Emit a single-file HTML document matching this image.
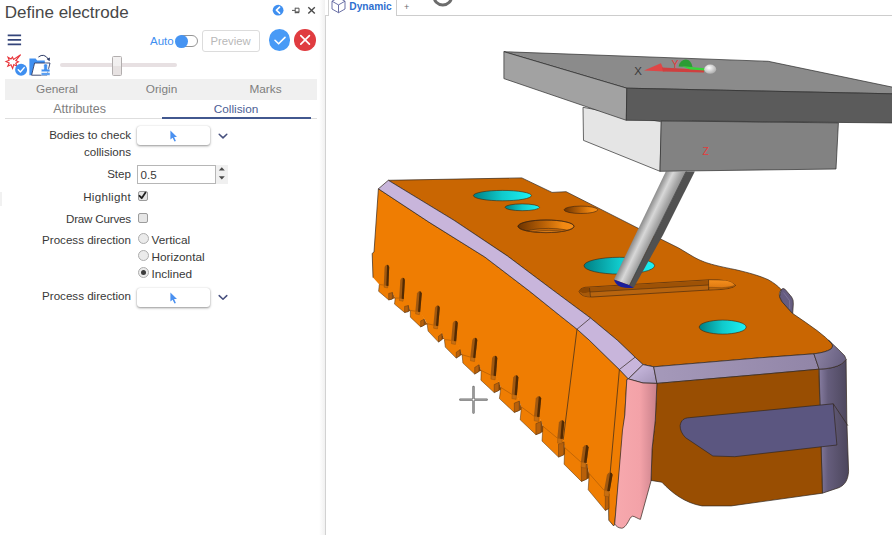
<!DOCTYPE html>
<html><head><meta charset="utf-8">
<style>
html,body{margin:0;padding:0;}
body{width:892px;height:535px;overflow:hidden;background:#fff;position:relative;font-family:"Liberation Sans",sans-serif;color:#3a3a3a;}
.abs{position:absolute;}
.t{position:absolute;white-space:nowrap;line-height:1;}
.lbl{position:absolute;white-space:nowrap;line-height:1;font-size:11.6px;color:#383838;text-align:right;right:761px;}
.opt{position:absolute;white-space:nowrap;line-height:1;font-size:11.8px;color:#383838;left:151.5px;}
.tab{position:absolute;white-space:nowrap;line-height:1;font-size:11.8px;color:#7e7e7e;transform:translateX(-50%);}
.pick{position:absolute;left:137px;width:73px;height:19.5px;background:#fff;border-radius:3px;box-shadow:0 1px 2.5px rgba(0,0,0,.42),0 0 1px rgba(0,0,0,.15);}
.cb{position:absolute;left:137.6px;width:8px;height:8px;border:1px solid #9c9c9c;border-radius:2px;background:#e6e6e6;}
.rd{position:absolute;left:138px;width:9.4px;height:9.4px;border:1px solid #adadad;border-radius:50%;background:#ebebeb;}
</style></head><body>
<!-- left panel -->
<div class="t" id="title" style="left:4.8px;top:3.6px;font-size:17px;color:#474747;">Define electrode</div>
<div class="abs" style="left:319px;top:0;width:6px;height:535px;background:linear-gradient(90deg,#ffffff,#f1f1f1);"></div>
<div class="abs" style="left:325px;top:15px;width:1px;height:520px;background:#d2d2d2;"></div>
<div class="abs" style="left:325px;top:14.5px;width:4px;height:1px;background:#d2d2d2;"></div>
<div class="abs" style="left:328px;top:0;width:1px;height:15px;background:#d2d2d2;"></div>
<div class="abs" style="left:395.5px;top:0;width:1px;height:15px;background:#cdcdcd;"></div>
<div class="abs" style="left:395.5px;top:14.5px;width:497px;height:1px;background:#cdcdcd;"></div>
<div class="t" style="left:349.3px;top:2.2px;font-size:10.2px;font-weight:bold;color:#2f6fd0;">Dynamic</div>
<div class="t" style="left:404px;top:3.2px;font-size:9px;color:#6a6a6a;">+</div>
<div class="t" style="left:150px;top:35.5px;font-size:11.5px;color:#3f8ff0;">Auto</div>
<div class="abs" style="left:176.5px;top:35.3px;width:19px;height:9.8px;border:1px solid #959595;border-radius:7px;background:#fff;"></div>
<div class="abs" style="left:175.4px;top:34.9px;width:12.8px;height:12.8px;border-radius:50%;background:#4694f2;"></div>
<div class="abs" style="left:201.5px;top:30px;width:56.5px;height:20px;border:1px solid #dcdcdc;border-radius:3px;"></div>
<div class="t" style="left:210.5px;top:35.5px;font-size:11.3px;color:#b8b8b8;">Preview</div>
<div class="abs" style="left:268.6px;top:28.9px;width:21.7px;height:21.7px;border-radius:50%;background:#489af6;"></div>
<div class="abs" style="left:294.2px;top:28.9px;width:21.7px;height:21.7px;border-radius:50%;background:#e03c40;"></div>
<!-- slider -->
<div class="abs" style="left:60px;top:63.3px;width:117px;height:4px;background:#e7e0e2;border-radius:2px;"></div>
<div class="abs" style="left:112px;top:56px;width:7.8px;height:17.5px;border:1px solid #b2aeae;background:linear-gradient(180deg,#f3f1f1 0%,#f1efef 48%,#e7e2e2 52%,#e7e2e2 100%);border-radius:1.5px;"></div>
<!-- tabs -->
<div class="abs" style="left:5.2px;top:79px;width:311.8px;height:20.5px;background:#f0f0f0;"></div>
<div class="tab" style="left:57px;top:83.5px;">General</div>
<div class="tab" style="left:161.5px;top:83.5px;">Origin</div>
<div class="tab" style="left:265.5px;top:83.5px;">Marks</div>
<div class="tab" style="left:79.6px;top:103.3px;font-size:12.5px;">Attributes</div>
<div class="tab" style="left:236px;top:103.5px;color:#4c6096;">Collision</div>
<div class="abs" style="left:5.2px;top:118px;width:311.8px;height:1px;background:#dedede;"></div>
<div class="abs" style="left:162px;top:117px;width:149px;height:2px;background:#42588f;"></div>
<div class="abs" style="left:0;top:192px;width:2px;height:14px;background:#f1f1f1;"></div>
<!-- form -->
<div class="lbl" style="top:129px;">Bodies to check</div>
<div class="lbl" style="top:145.5px;">collisions</div>
<div class="pick" style="top:125.5px;"></div>
<div class="lbl" style="top:167.5px;">Step</div>
<div class="abs" style="left:137px;top:164.5px;width:76.5px;height:17px;border:1px solid #b6b6b6;background:#fff;"></div>
<div class="t" style="left:140.5px;top:168.5px;font-size:11.6px;color:#383838;">0.5</div>
<div class="abs" style="left:215.5px;top:165px;width:12.5px;height:19px;background:#f0f0f0;"></div>
<div class="lbl" style="top:190.5px;letter-spacing:0.3px;">Highlight</div>
<div class="cb" style="top:190.8px;"></div>
<div class="lbl" style="top:212.7px;letter-spacing:-0.18px;">Draw Curves</div>
<div class="cb" style="top:212.8px;"></div>
<div class="lbl" style="top:234.3px;">Process direction</div>
<div class="rd" style="top:232.7px;"></div>
<div class="opt" style="top:234.8px;">Vertical</div>
<div class="rd" style="top:249.8px;"></div>
<div class="opt" style="top:252px;">Horizontal</div>
<div class="rd" style="top:267.1px;"></div>
<div class="abs" style="left:141.2px;top:270.3px;width:5px;height:5px;border-radius:50%;background:#3c3c3c;"></div>
<div class="opt" style="top:268.8px;">Inclined</div>
<div class="lbl" style="top:290.3px;">Process direction</div>
<div class="pick" style="top:287.5px;"></div>
<!-- panel icons -->
<svg class="abs" style="left:0;top:0;" width="330" height="320" viewBox="0 0 330 320">
<!-- hamburger -->
<path d="M7.7,35.3 H21.1 M7.7,39.9 H21.1 M7.7,44.4 H21.1" stroke="#34457a" stroke-width="1.8" fill="none"/>
<!-- titlebar icons -->
<circle cx="278.1" cy="10.2" r="5.4" fill="#3f8ff0"/>
<path d="M279.6,7.2 L276.4,10.2 L279.6,13.2" stroke="#fff" stroke-width="1.6" fill="none" stroke-linecap="round" stroke-linejoin="round"/>
<path d="M292,10.4 H295.2 M295.2,7.8 V13.2 M295.2,8.2 H299 V12.2 H295.2" stroke="#555" stroke-width="1" fill="none"/>
<path d="M295.2,12.4 H299.2" stroke="#555" stroke-width="1.6" fill="none"/>
<path d="M308.3,7.3 L314.8,13.6 M314.8,7.3 L308.3,13.6" stroke="#4a4a4a" stroke-width="1.4" fill="none"/>
<!-- check / x in circles -->
<path d="M275,40.3 L278.6,43.8 L285,37.4" stroke="#fff" stroke-width="1.6" fill="none" stroke-linecap="round" stroke-linejoin="round"/>
<path d="M300.8,35.7 L309.4,44.1 M309.4,35.7 L300.8,44.1" stroke="#fff" stroke-width="1.7" fill="none" stroke-linecap="round"/>
<!-- spark icon -->
<g stroke="#e8343a" stroke-width="1.1" fill="#fff" stroke-linejoin="miter">
<path d="M12.4,57 L13.6,59.4 L20.6,54.6 L15.8,60.6 L18.4,61.8 L15.8,63.2 L17,66.4 L13.8,64.6 L12.6,68.4 L11,64.8 L7.8,66.2 L9.2,63 L6,61.6 L9.2,60.2 L8,57.2 L11,59 Z"/>
</g>
<circle cx="21.1" cy="69.7" r="6" fill="#3f8ff0"/>
<path d="M18.2,69.8 L20.4,72 L24.2,67.6" stroke="#fff" stroke-width="1.4" fill="none" stroke-linecap="round" stroke-linejoin="round"/>
<!-- folder icon -->
<path d="M29.4,58.4 H35.6 L37.2,60.6 H44.8 V63 H34.6 L31.6,75.2 H29.4 Z" fill="#3f8ff0"/>
<path d="M34.6,63 H50 L47,75.2 H31.6 Z" fill="#fff" stroke="#2c3a66" stroke-width="0.9"/>
<path d="M38.4,57 Q44,52.6 48.6,59.4" stroke="#2c3a66" stroke-width="1" fill="none"/>
<path d="M46.6,59 L49.6,61.2 L50,57.6 Z" fill="#2c3a66"/>
<path d="M43.9,66.6 a1.9,1.9 0 1 1 3.4,0 v2.6 h2.6 v2.6 h-8.6 v-2.6 h2.6 Z M41.2,72.8 h8.8 v2.4 h-8.8 Z" fill="#3f8ff0" stroke="#fff" stroke-width="0.5"/>
<!-- pick cursors -->
<path id="cur" d="M170.4,130.4 L170.4,139.6 L172.6,137.7 L174.5,141.6 L175.9,140.9 L174.1,137.1 L177,136.9 Z" fill="#4a90f0"/>
<path d="M170.4,292.4 L170.4,301.6 L172.6,299.7 L174.5,303.6 L175.9,302.9 L174.1,299.1 L177,298.9 Z" fill="#4a90f0"/>
<!-- chevrons -->
<path d="M219.2,134.2 L223,137.9 L226.8,134.2" stroke="#47507e" stroke-width="1.5" fill="none" stroke-linecap="round" stroke-linejoin="round"/>
<path d="M219.2,295.6 L223,299.3 L226.8,295.6" stroke="#47507e" stroke-width="1.5" fill="none" stroke-linecap="round" stroke-linejoin="round"/>
<!-- spinner arrows -->
<path d="M218.8,170.4 L221.8,167.2 L224.8,170.4 Z M218.8,176.2 L221.8,179.4 L224.8,176.2 Z" fill="#4a4a4a"/>
<!-- checkmark -->
<path d="M139.5,195.8 L141.7,198.2 L145.5,192.6" stroke="#222" stroke-width="1.8" fill="none" stroke-linecap="round" stroke-linejoin="round"/>
<!-- Dynamic cube -->
</svg>
<svg class="abs" style="left:326px;top:0;" width="140" height="16" viewBox="326 0 140 16">
<path d="M338.5,-2.4 L345,1.2 V9 L338.5,12.7 L332,9 V1.2 Z M332,1.2 L338.5,4.9 L345,1.2 M338.5,4.9 V12.7" stroke="#5a609c" stroke-width="0.9" fill="none" stroke-linejoin="round"/>
<circle cx="442.8" cy="-3.7" r="8.8" stroke="#6c6c6c" stroke-width="3" fill="none"/>
</svg>
<!-- viewport -->
<svg class="abs" style="left:0;top:0;" width="892" height="535" viewBox="0 0 892 535">
<defs>
<linearGradient id="teal" x1="0" y1="0" x2="1" y2="0"><stop offset="0" stop-color="#008084"/><stop offset="0.5" stop-color="#10cacc"/><stop offset="1" stop-color="#1cf2f4"/></linearGradient>
<linearGradient id="hole" x1="0" y1="0" x2="1" y2="0"><stop offset="0" stop-color="#6e3400"/><stop offset="0.45" stop-color="#b86006"/><stop offset="0.8" stop-color="#f08812"/><stop offset="1" stop-color="#f58c16"/></linearGradient>
<linearGradient id="rod" x1="0" y1="0" x2="1" y2="0"><stop offset="0" stop-color="#6e6e6e"/><stop offset="0.32" stop-color="#f2f2f2"/><stop offset="0.6" stop-color="#c4c4c4"/><stop offset="1" stop-color="#8a8a8a"/></linearGradient>
<linearGradient id="fcham" x1="0" y1="0" x2="1" y2="0"><stop offset="0" stop-color="#a599ba"/><stop offset="1" stop-color="#9185a7"/></linearGradient>
<linearGradient id="rside" x1="0" y1="0" x2="1" y2="0"><stop offset="0" stop-color="#867ca0"/><stop offset="0.3" stop-color="#655d7c"/><stop offset="1" stop-color="#4c465c"/></linearGradient>
<linearGradient id="pink" x1="0" y1="0" x2="1" y2="0"><stop offset="0" stop-color="#f7a9ae"/><stop offset="0.6" stop-color="#f3a2a8"/><stop offset="1" stop-color="#c8808a"/></linearGradient>
<linearGradient id="corner" x1="0" y1="0" x2="1" y2="1"><stop offset="0" stop-color="#d0c0e6"/><stop offset="1" stop-color="#a294b8"/></linearGradient>
<linearGradient id="rcorner" x1="0" y1="0" x2="1" y2="0.3"><stop offset="0" stop-color="#9086a8"/><stop offset="1" stop-color="#6a6282"/></linearGradient>
</defs>
<g stroke="#32261e" stroke-width="0.7" stroke-linejoin="round">
<!-- ORANGE BODY -->
<!-- side face -->
<path fill="#ef7d02" stroke="none" d="M378.4,188.8 L428.9,222.1 L484.8,257 L529.7,291.3 L560,315.7 L577,329.2 L589.1,340 L619.4,369.5 L628.4,378.9 L626.8,379.6 L624.8,415 L614.7,524 L613.7,526 L608.8,520.2 L608.4,493 L609.7,491.1 L589.2,473.5 L586.5,462.7 L564.7,447.6 L562.7,438.8 L542.9,426.2 L539.4,416.9 L521.4,406.9 L516.9,395.0 L500.9,387.5 L495.9,375.8 L481.2,370.5 L475.3,357.8 L462.1,354.7 L456.2,341.0 L444.4,339.6 L438.2,325.8 L427.1,323.6 L420.2,311.9 L410.3,310.4 L403.8,298.8 L395.2,298.0 L388.4,285.8 L379.3,284.5 L373,277.6 L372.2,253.4 L374,252 Z"/>
<path fill="none" d="M378.4,188.8 L428.9,222.1 L484.8,257 L529.7,291.3 L560,315.7 L577,329.2 L589.1,340 L619.4,369.5 L628.4,378.9 L626.8,379.6 L624.8,415 L614.7,524 L613.7,526 L608.8,520.2 L608.4,493 M373,277.6 L372.2,253.4 L374,252 L378.4,188.8"/>
<!-- top face -->
<path fill="#c96602" d="M388.3,180.3 L521.8,177.9 L552,192.4 L566.1,191.7 L639,228.7 L660,238.7 L678.7,248 L692,256 C703,262.5 712,265 734.8,269.5 C750,273 760,276 768.4,279.8 C774,283 778,286 781.2,289.6 C779.3,292 779,294.5 779.6,296.6 C780.3,299 781,300.6 782.4,302.2 L792.7,313.5 L805.2,322.1 L817,330.5 L825.4,337.3 L831,342.8 Q834.2,346 830.8,349.2 Q825,352.6 813.9,353.8 L760,357.8 L653.7,366.8 L643,364.6 L635.1,357.2 L617.1,340 L590.5,318 L552.1,289.5 L507.3,255.9 L454,220.3 Z"/>
<!-- long chamfer -->
<path fill="#c8b5db" d="M388.3,180.3 L454,220.3 L507.3,255.9 L552.1,289.5 L590.5,318 L617.1,340 L635.1,357.2 L643,364.6 L653.7,366.8 L656.9,383.4 L643,383 L628.4,378.9 L619.4,369.5 L589.1,340 L577,329.2 L560,315.7 L529.7,291.3 L484.8,257 L428.9,222.1 L378.4,188.8 Z"/>
<path fill="none" d="M590.5,318 L577,329.2 M635.1,357.2 L619.4,369.5 M643,364.6 L628.4,378.9 M577,329.2 L563.2,440 M619.4,369.5 L608.4,492.7"/>
<!-- corner chamfer -->
<path fill="url(#corner)" d="M643,364.6 L653.7,366.8 L656.9,383.4 L643,383 L628.4,378.9 Z"/>
<!-- front chamfer -->
<path fill="url(#fcham)" d="M653.7,366.8 L760,357.8 L813.9,353.8 L819.1,369.2 L760,374.5 L656.9,383.4 Z"/>
<!-- corner + right side -->
<path fill="url(#rside)" d="M819.1,369.2 Q834,368.6 841.6,364 L846.1,359.5 L846.8,420 L848.6,471.3 C848,480 845,485 838.8,487.7 L822.4,493.2 Z"/>
<path fill="url(#rcorner)" d="M828.4,340 L832.4,343.8 L838.9,349.9 L844.7,355.8 L846.1,359.5 L841.6,364 Q834,368.6 819.1,369.2 L813.9,353.8 Q825,352.6 830.8,349.2 Q834.2,346 831,342.8 Z"/>
<!-- notch sliver -->
<path fill="#655c80" d="M781.2,289.6 Q783,287.4 785.2,289.4 L791.6,297 Q793.8,300 793.3,304 L792.7,313.5 L782.4,302.2 L779.6,296.6 Z"/>
<path fill="none" stroke="#8a82a4" stroke-width="0.6" d="M783.6,292.6 L789.6,300.6 L789.8,309"/>
<!-- front face -->
<path fill="#994e02" d="M656.9,383.4 L760,374.5 L818.8,369.2 L822.4,493.2 L731.2,505.9 L702,505.9 C685,503 672,493 661.9,482.2 L651,480.4 L652.1,448.6 L655.3,420 Z"/>
<!-- front slot -->
<path fill="#5b5680" d="M680.1,425.7 C681,420 684,418 689.2,417.7 L833.3,403.8 L836.9,445 L734.8,456.7 L712.9,456 L685.6,437.7 C682,434 680,430 680.1,425.7 Z"/>
<path fill="none" d="M833.3,403.8 L847.9,425.7"/>
<!-- teeth -->
<path fill="#9a5006" stroke="none" d="M392.4,292.5 L392.4,299.0 L395.0,298.2 L395.5,299.5 L395.2,298.0 Z"/>
<path fill="#ef7d02" stroke="none" d="M379.3,284.5 L378.6,291.3 L388.7,299.9 L392.4,299.0 L392.4,292.5 L392.1,290.9 L388.4,284.1 L380.7,283.3 Z"/>
<path fill="none" stroke="#4a2806" stroke-width="0.5" d="M379.3,284.5 L378.6,291.3 L388.7,299.9 L392.4,299.0 L392.4,292.5"/>
<path fill="none" stroke="#8a4a08" stroke-width="0.45" d="M379.3,284.5 L383.8,285.1"/>
<path fill="#b8600a" stroke-width="0.35" d="M388.7,299.9 L392.4,299.0 L392.4,292.5 L388.7,293.4 Z"/>
<path fill="#c66e12" stroke="#7a4208" stroke-width="0.3" d="M384.2,285.0 L388.0,286.0 L387.6,288.0 L384.0,287.2 Z"/>
<path fill="#a05810" stroke="none" d="M384.6,267.0 Q386.9,262.5 389.2,267.0 L388.4,286.0 L383.8,285.0 Z"/>
<path fill="#522a02" stroke="none" d="M387.1,264.8 Q388.7,264.7 389.2,267.0 L388.4,286.0 L386.3,285.7 Z"/>
<path fill="#9a5006" stroke="none" d="M408.3,305.5 L408.3,311.6 L410.8,310.8 L410.6,311.9 L410.3,310.4 Z"/>
<path fill="#ef7d02" stroke="none" d="M395.2,298.0 L394.5,304.1 L404.6,312.5 L408.3,311.6 L408.3,305.5 L408.0,303.9 L403.8,297.1 L396.6,296.8 Z"/>
<path fill="none" stroke="#4a2806" stroke-width="0.5" d="M395.2,298.0 L394.5,304.1 L404.6,312.5 L408.3,311.6 L408.3,305.5"/>
<path fill="none" stroke="#8a4a08" stroke-width="0.45" d="M395.2,298.0 L399.2,298.1"/>
<path fill="#b8600a" stroke-width="0.35" d="M404.6,312.5 L408.3,311.6 L408.3,305.5 L404.6,306.4 Z"/>
<path fill="#c66e12" stroke="#7a4208" stroke-width="0.3" d="M399.6,298.0 L403.4,299.0 L403.0,301.3 L399.4,300.5 Z"/>
<path fill="#a05810" stroke="none" d="M400.3,280.0 Q402.6,275.5 404.9,280.0 L403.8,299.0 L399.2,298.0 Z"/>
<path fill="#522a02" stroke="none" d="M402.8,277.8 Q404.5,277.7 404.9,280.0 L403.8,299.0 L401.7,298.7 Z"/>
<path fill="#9a5006" stroke="none" d="M424.2,319.2 L424.2,325.2 L426.9,324.4 L427.4,325.1 L427.1,323.6 Z"/>
<path fill="#ef7d02" stroke="none" d="M410.3,310.4 L410.4,317.2 L420.7,326.9 L424.2,325.2 L424.2,319.2 L423.9,317.6 L420.2,310.2 L411.7,309.2 Z"/>
<path fill="none" stroke="#4a2806" stroke-width="0.5" d="M410.3,310.4 L410.4,317.2 L420.7,326.9 L424.2,325.2 L424.2,319.2"/>
<path fill="none" stroke="#8a4a08" stroke-width="0.45" d="M410.3,310.4 L415.4,311.2"/>
<path fill="#b8600a" stroke-width="0.35" d="M420.7,326.9 L424.2,325.2 L424.2,319.2 L420.7,320.9 Z"/>
<path fill="#c66e12" stroke="#7a4208" stroke-width="0.3" d="M415.8,311.1 L419.8,312.1 L419.4,314.7 L415.6,313.9 Z"/>
<path fill="#a05810" stroke="none" d="M417.0,293.4 Q419.4,288.9 421.8,293.4 L420.2,312.1 L415.4,311.1 Z"/>
<path fill="#522a02" stroke="none" d="M419.6,291.2 Q421.3,291.1 421.8,293.4 L420.2,312.1 L418.0,311.8 Z"/>
<path fill="#9a5006" stroke="none" d="M441.9,333.7 L441.9,339.6 L444.5,338.8 L444.7,341.1 L444.4,339.6 Z"/>
<path fill="#ef7d02" stroke="none" d="M427.1,323.6 L428.1,331.1 L438.5,342.1 L441.9,339.6 L441.9,333.7 L441.6,332.1 L438.2,324.1 L428.5,322.4 Z"/>
<path fill="none" stroke="#4a2806" stroke-width="0.5" d="M427.1,323.6 L428.1,331.1 L438.5,342.1 L441.9,339.6 L441.9,333.7"/>
<path fill="none" stroke="#8a4a08" stroke-width="0.45" d="M427.1,323.6 L433.4,325.1"/>
<path fill="#b8600a" stroke-width="0.35" d="M438.5,342.1 L441.9,339.6 L441.9,333.7 L438.5,336.2 Z"/>
<path fill="#c66e12" stroke="#7a4208" stroke-width="0.3" d="M433.8,325.0 L437.8,326.0 L437.4,329.0 L433.6,328.2 Z"/>
<path fill="#a05810" stroke="none" d="M435.0,307.8 Q437.4,303.3 439.8,307.8 L438.2,326.0 L433.4,325.0 Z"/>
<path fill="#522a02" stroke="none" d="M437.6,305.6 Q439.3,305.5 439.8,307.8 L438.2,326.0 L436.0,325.7 Z"/>
<path fill="#9a5006" stroke="none" d="M460.1,349.7 L460.1,355.6 L462.6,354.8 L462.4,356.2 L462.1,354.7 Z"/>
<path fill="#ef7d02" stroke="none" d="M444.4,339.6 L445.3,347.1 L456.2,358.1 L460.1,355.6 L460.1,349.7 L459.8,348.1 L456.2,339.3 L445.8,338.4 Z"/>
<path fill="none" stroke="#4a2806" stroke-width="0.5" d="M444.4,339.6 L445.3,347.1 L456.2,358.1 L460.1,355.6 L460.1,349.7"/>
<path fill="none" stroke="#8a4a08" stroke-width="0.45" d="M444.4,339.6 L451.2,340.3"/>
<path fill="#b8600a" stroke-width="0.35" d="M456.2,358.1 L460.1,355.6 L460.1,349.7 L456.2,352.2 Z"/>
<path fill="#c66e12" stroke="#7a4208" stroke-width="0.3" d="M451.6,340.2 L455.8,341.2 L455.4,344.5 L451.4,343.7 Z"/>
<path fill="#a05810" stroke="none" d="M452.8,323.0 Q455.3,318.5 457.8,323.0 L456.2,341.2 L451.2,340.2 Z"/>
<path fill="#522a02" stroke="none" d="M455.5,320.8 Q457.3,320.7 457.8,323.0 L456.2,341.2 L453.9,340.9 Z"/>
<path fill="#9a5006" stroke="none" d="M478.9,364.8 L478.9,371.5 L481.5,370.7 L481.6,372.0 L481.2,370.5 Z"/>
<path fill="#ef7d02" stroke="none" d="M462.1,354.7 L462.9,363.1 L474.7,374.1 L478.9,371.5 L478.9,364.8 L478.6,363.2 L475.3,356.1 L463.5,353.5 Z"/>
<path fill="none" stroke="#4a2806" stroke-width="0.5" d="M462.1,354.7 L462.9,363.1 L474.7,374.1 L478.9,371.5 L478.9,364.8"/>
<path fill="none" stroke="#8a4a08" stroke-width="0.45" d="M462.1,354.7 L470.3,357.1"/>
<path fill="#b8600a" stroke-width="0.35" d="M474.7,374.1 L478.9,371.5 L478.9,364.8 L474.7,367.4 Z"/>
<path fill="#c66e12" stroke="#7a4208" stroke-width="0.3" d="M470.7,357.0 L474.9,358.0 L474.5,361.6 L470.5,360.8 Z"/>
<path fill="#a05810" stroke="none" d="M472.3,339.9 Q474.8,335.4 477.3,339.9 L475.3,358.0 L470.3,357.0 Z"/>
<path fill="#522a02" stroke="none" d="M475.1,337.7 Q476.8,337.6 477.3,339.9 L475.3,358.0 L473.1,357.7 Z"/>
<path fill="#9a5006" stroke="none" d="M498.9,382.4 L498.9,390.4 L501.4,389.6 L501.2,389.0 L500.9,387.5 Z"/>
<path fill="#ef7d02" stroke="none" d="M481.2,370.5 L480.9,380.2 L494.2,392.6 L498.9,390.4 L498.9,382.4 L498.6,380.8 L495.9,374.1 L482.6,369.3 Z"/>
<path fill="none" stroke="#4a2806" stroke-width="0.5" d="M481.2,370.5 L480.9,380.2 L494.2,392.6 L498.9,390.4 L498.9,382.4"/>
<path fill="none" stroke="#8a4a08" stroke-width="0.45" d="M481.2,370.5 L490.7,375.1"/>
<path fill="#b8600a" stroke-width="0.35" d="M494.2,392.6 L498.9,390.4 L498.9,382.4 L494.2,384.6 Z"/>
<path fill="#c66e12" stroke="#7a4208" stroke-width="0.3" d="M491.1,375.0 L495.5,376.0 L495.1,379.9 L490.9,379.1 Z"/>
<path fill="#a05810" stroke="none" d="M492.1,358.0 Q494.7,353.5 497.3,358.0 L495.9,376.0 L490.7,375.0 Z"/>
<path fill="#522a02" stroke="none" d="M495.0,355.8 Q496.8,355.7 497.3,358.0 L495.9,376.0 L493.6,375.7 Z"/>
<path fill="#9a5006" stroke="none" d="M519.3,401.1 L519.3,410.4 L521.9,409.6 L521.7,408.4 L521.4,406.9 Z"/>
<path fill="#ef7d02" stroke="none" d="M500.9,387.5 L499.4,398.6 L514.3,412.4 L519.3,410.4 L519.3,401.1 L519.0,399.5 L516.9,393.3 L502.3,386.3 Z"/>
<path fill="none" stroke="#4a2806" stroke-width="0.5" d="M500.9,387.5 L499.4,398.6 L514.3,412.4 L519.3,410.4 L519.3,401.1"/>
<path fill="none" stroke="#8a4a08" stroke-width="0.45" d="M500.9,387.5 L511.7,394.3"/>
<path fill="#b8600a" stroke-width="0.35" d="M514.3,412.4 L519.3,410.4 L519.3,401.1 L514.3,403.1 Z"/>
<path fill="#c66e12" stroke="#7a4208" stroke-width="0.3" d="M512.1,394.2 L516.5,395.2 L516.1,399.4 L511.9,398.6 Z"/>
<path fill="#a05810" stroke="none" d="M513.2,377.4 Q515.8,372.9 518.4,377.4 L516.9,395.2 L511.7,394.2 Z"/>
<path fill="#522a02" stroke="none" d="M516.1,375.2 Q517.9,375.1 518.4,377.4 L516.9,395.2 L514.6,394.9 Z"/>
<path fill="#9a5006" stroke="none" d="M541.1,421.5 L541.1,432.6 L543.4,431.8 L543.2,427.7 L542.9,426.2 Z"/>
<path fill="#ef7d02" stroke="none" d="M521.4,406.9 L520.2,419.8 L535.9,434.7 L541.1,432.6 L541.1,421.5 L540.8,419.9 L539.4,415.2 L522.8,405.7 Z"/>
<path fill="none" stroke="#4a2806" stroke-width="0.5" d="M521.4,406.9 L520.2,419.8 L535.9,434.7 L541.1,432.6 L541.1,421.5"/>
<path fill="none" stroke="#8a4a08" stroke-width="0.45" d="M521.4,406.9 L534.0,416.2"/>
<path fill="#b8600a" stroke-width="0.35" d="M535.9,434.7 L541.1,432.6 L541.1,421.5 L535.9,423.6 Z"/>
<path fill="#c66e12" stroke="#7a4208" stroke-width="0.3" d="M534.4,416.1 L539.0,417.1 L538.6,421.6 L534.2,420.8 Z"/>
<path fill="#a05810" stroke="none" d="M535.8,398.5 Q538.5,394.0 541.2,398.5 L539.4,417.1 L534.0,416.1 Z"/>
<path fill="#522a02" stroke="none" d="M538.8,396.3 Q540.6,396.2 541.2,398.5 L539.4,417.1 L537.0,416.8 Z"/>
<path fill="#9a5006" stroke="none" d="M563.8,441.9 L563.8,454.8 L565.2,454.0 L565.0,449.1 L564.7,447.6 Z"/>
<path fill="#ef7d02" stroke="none" d="M542.9,426.2 L542.0,441.1 L558.5,457.1 L563.8,454.8 L563.8,441.9 L563.5,440.3 L562.7,437.1 L544.3,425.0 Z"/>
<path fill="none" stroke="#4a2806" stroke-width="0.5" d="M542.9,426.2 L542.0,441.1 L558.5,457.1 L563.8,454.8 L563.8,441.9"/>
<path fill="none" stroke="#8a4a08" stroke-width="0.45" d="M542.9,426.2 L557.3,438.1"/>
<path fill="#b8600a" stroke-width="0.35" d="M558.5,457.1 L563.8,454.8 L563.8,441.9 L558.5,444.2 Z"/>
<path fill="#c66e12" stroke="#7a4208" stroke-width="0.3" d="M557.7,438.0 L562.3,439.0 L561.9,443.9 L557.5,443.1 Z"/>
<path fill="#a05810" stroke="none" d="M558.9,422.5 Q561.6,418.0 564.3,422.5 L562.7,439.0 L557.3,438.0 Z"/>
<path fill="#522a02" stroke="none" d="M561.9,420.3 Q563.8,420.2 564.3,422.5 L562.7,439.0 L560.3,438.7 Z"/>
<path fill="#9a5006" stroke="none" d="M586.9,464.3 L586.9,479.0 L589.5,478.2 L589.5,475.0 L589.2,473.5 Z"/>
<path fill="#ef7d02" stroke="none" d="M564.7,447.6 L564.1,464.3 L581.4,481.4 L586.9,479.0 L586.9,464.3 L586.6,462.7 L586.5,461.0 L566.1,446.4 Z"/>
<path fill="none" stroke="#4a2806" stroke-width="0.5" d="M564.7,447.6 L564.1,464.3 L581.4,481.4 L586.9,479.0 L586.9,464.3"/>
<path fill="none" stroke="#8a4a08" stroke-width="0.45" d="M564.7,447.6 L580.9,462.0"/>
<path fill="#b8600a" stroke-width="0.35" d="M581.4,481.4 L586.9,479.0 L586.9,464.3 L581.4,466.7 Z"/>
<path fill="#c66e12" stroke="#7a4208" stroke-width="0.3" d="M581.3,461.9 L586.1,462.9 L585.7,468.1 L581.1,467.3 Z"/>
<path fill="#a05810" stroke="none" d="M583.0,447.2 Q585.8,442.7 588.6,447.2 L586.5,462.9 L580.9,461.9 Z"/>
<path fill="#522a02" stroke="none" d="M586.1,445.0 Q588.0,444.9 588.6,447.2 L586.5,462.9 L584.0,462.6 Z"/>
<path fill="#ef7d02" stroke="none" d="M589.2,473.5 L588.2,489.8 L605.3,510.4 L608.8,508.4 L608.8,493.7 L608.5,492.1 L609.7,489.4 L590.6,472.3 Z"/>
<path fill="none" stroke="#4a2806" stroke-width="0.5" d="M589.2,473.5 L588.2,489.8 L605.3,510.4 L608.8,508.4 L608.8,493.7"/>
<path fill="none" stroke="#8a4a08" stroke-width="0.45" d="M589.2,473.5 L604.1,490.4"/>
<path fill="#b8600a" stroke-width="0.35" d="M605.3,510.4 L608.8,508.4 L608.8,493.7 L605.3,495.7 Z"/>
<path fill="#c66e12" stroke="#7a4208" stroke-width="0.3" d="M604.5,490.3 L609.3,491.3 L608.9,496.8 L604.3,496.0 Z"/>
<path fill="#a05810" stroke="none" d="M607.0,474.7 Q609.8,470.2 612.6,474.7 L609.7,491.3 L604.1,490.3 Z"/>
<path fill="#522a02" stroke="none" d="M610.1,472.5 Q612.0,472.4 612.6,474.7 L609.7,491.3 L607.2,491.0 Z"/>
<!-- pink face -->
<path fill="url(#pink)" d="M628.4,378.9 L643,383 L656.9,383.4 L655.3,420 L652.1,448.6 L651,481.1 L640.4,519.4 C637.5,518.6 634.5,516.2 632.6,516.2 C630.6,516.6 629.6,519.4 628.4,521.4 C626,526 623.5,528.2 621.6,528.2 C618,528 616,526 614.7,524 L622.5,430 L624.8,415 L626.8,379.6 Z"/>
</g>
<g stroke="#3a2410" stroke-width="0.6">
<!-- holes -->
<ellipse cx="502.4" cy="195.6" rx="29" ry="5.2" fill="url(#teal)"/>
<ellipse cx="522.2" cy="207.3" rx="17.2" ry="3.4" fill="url(#teal)"/>
<ellipse cx="580.9" cy="209.8" rx="16.9" ry="3.7" fill="url(#hole)"/>
<ellipse cx="546" cy="226.3" rx="28" ry="6.3" fill="url(#hole)"/>
<clipPath id="cb"><ellipse cx="546" cy="226.3" rx="28" ry="6.3"/></clipPath>
<ellipse cx="548.5" cy="232.4" rx="22" ry="4" fill="#c4670a" stroke-width="0.5" clip-path="url(#cb)"/>
<ellipse cx="549" cy="233.4" rx="17" ry="3" fill="#d67a18" stroke-width="0.4" clip-path="url(#cb)"/>
<ellipse cx="546" cy="226.3" rx="28" ry="6.3" fill="none"/>
<ellipse cx="619.3" cy="265.7" rx="35.3" ry="8.4" fill="url(#teal)"/>
<ellipse cx="722.7" cy="327.1" rx="23.5" ry="7" fill="url(#teal)"/>
<!-- top slot -->
<path fill="#b8640e" d="M579,291.5 Q580,288 585,287.3 L708.6,279.8 Q730,279 735.7,285.4 Q733,289.6 708.6,290 L592,297 Q581,297 579,291.5 Z"/>
<path fill="#9e5206" stroke="none" d="M580.4,289.8 Q582,288 586,287.8 L708.6,280.4 L708.6,285 L590,292 Z"/>
<path fill="url(#slotend)" stroke="none" d="M709,280.3 L725.4,280.5 Q732,281.5 735.2,285.4 Q732,288.6 709,289.6 Z"/>
<path fill="#8c4602" stroke="none" d="M579.3,291.5 Q580,288.2 585,287.6 L589.6,287.3 L590.1,292.2 L583,293.4 Z"/>
<path fill="#a85a0a" stroke="none" d="M579.3,291.5 L583,293.4 L590.1,292.2 L590.5,296.8 Q582,296.8 579.3,291.5 Z"/>
<path fill="#bc660c" stroke="#5a3008" stroke-width="0.35" d="M708.8,287.3 L722,287.7 Q730,287.2 734.6,285.6 Q732,289 708.8,289.8 Z"/>
<path fill="none" stroke-width="0.5" d="M708.6,279.8 L708.6,290 M589.5,288 L590.5,297 M590,292 L708.6,285"/>
</g>
<!-- ROD -->
<g>
<polygon points="686.1,171.5 694.8,171.5 663,235 633.7,287.8 629.5,285.3" fill="#515151"/>
<polygon points="665.8,171.5 686.1,171.5 629.5,285.3 613.9,279.6" fill="url(#rodg)"/>
<path d="M686.1,171.5 L629.5,285.3" stroke="#3c3c3c" stroke-width="0.8" fill="none"/>
<path d="M613.9,279.6 Q615.5,285 621,287 Q627,288.6 633.7,287.8 L629.5,285.3 Z" fill="#1a1e9c"/>
</g>
<!-- PLATE -->
<g stroke="#2c2c2c" stroke-width="0.7" stroke-linejoin="round">
<polygon points="583,107.3 661.4,121.8 660,171.3 583.5,140.4" fill="#e5e5e5"/>
<polygon points="661.2,120.9 838.4,122.9 836,169 660,171.3" fill="#828282"/>
<polygon points="503.9,51.7 768.2,61.3 896,87.9 896,93.9 626.8,88.2" fill="#8b8b8b"/>
<polygon points="503.9,51.7 626.8,88.2 626.3,120.3 503.9,78.6" fill="#a2a2a2"/>
<polygon points="626.8,88.2 896,93.9 896,123 626.3,120.3" fill="#5b5b5b"/>
</g>
<!-- axes -->
<g>
<polygon points="644,70.4 660.9,63.2 664.6,71.4" fill="#df4646"/>
<polygon points="662,67.5 704,69.8 704,72.6 663,71.6" fill="#cf3f3f"/>
<path d="M678.6,66.6 Q680,59.6 686,59.4 Q691,59.6 692.5,66.9 Z" fill="#2c9c34"/>
<polygon points="682,66.2 705,68.2 705,70.6 690,69.6" fill="#36d43a"/>
<ellipse cx="710.2" cy="69.2" rx="6" ry="4.6" fill="url(#ball)"/>
<text x="634.3" y="74.8" font-family="Liberation Sans, sans-serif" font-size="11.5" fill="#3a3a3a">X</text>
<text x="671.6" y="68" font-family="Liberation Sans, sans-serif" font-size="10.5" fill="#e03c3c">Y</text>
<text x="702.6" y="155.3" font-family="Liberation Sans, sans-serif" font-size="10.5" fill="#e23b3b">Z</text>
</g>
<!-- crosshair -->
<path d="M460.3,399.7 H486.7 M473.5,386.8 V412.7" stroke="#6c6c6c" stroke-width="2.3" fill="none" stroke-linecap="round"/>
<path d="M460.6,399.7 H486.4 M473.5,387.1 V412.4" stroke="#989898" stroke-width="1.2" fill="none" stroke-linecap="round"/>
<circle cx="473.5" cy="399.7" r="0.9" fill="#fff"/>
<defs>
<linearGradient id="rodg" gradientUnits="userSpaceOnUse" x1="640" y1="225" x2="658.5" y2="233.8"><stop offset="0" stop-color="#8a8a8a"/><stop offset="0.36" stop-color="#d8d8d8"/><stop offset="0.7" stop-color="#a8a8a8"/><stop offset="1" stop-color="#868686"/></linearGradient>
<linearGradient id="slotend" x1="0" y1="0" x2="0" y2="1"><stop offset="0" stop-color="#f48e1c"/><stop offset="1" stop-color="#d87410"/></linearGradient>
<radialGradient id="ball" cx="0.4" cy="0.35" r="0.7"><stop offset="0" stop-color="#ffffff"/><stop offset="1" stop-color="#a8a8a8"/></radialGradient>
</defs>

</svg>
</body></html>
